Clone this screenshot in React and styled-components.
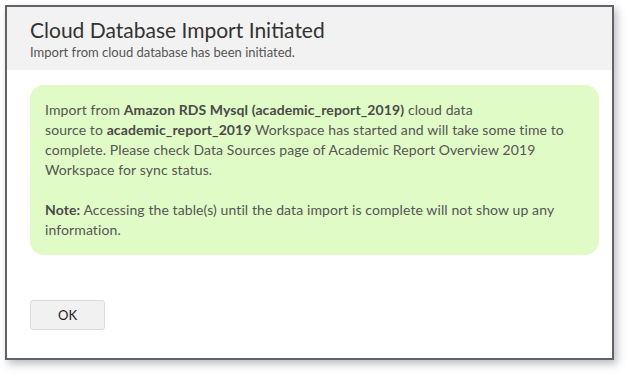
import styled, { createGlobalStyle } from "styled-components";

const Global = createGlobalStyle`
  body {
    margin: 0;
    background: #fff;
    font-family: "Lato", "Open Sans", sans-serif;
  }
`;

const Page = styled.div`
  width: 630px;
  height: 376px;
  padding: 5px 0 0 5px;
  box-sizing: border-box;
`;

const Dialog = styled.div`
  width: 609px;
  height: 355px;
  box-sizing: border-box;
  border: 2px solid #626268;
  background: #fff;
  box-shadow: 3px 4px 8px rgba(60, 70, 80, 0.35);
  display: flex;
  flex-direction: column;
`;

const Header = styled.div`
  background: #f2f2f2;
  height: 63px;
  padding: 10px 23px 0;
  box-sizing: border-box;
`;

const Title = styled.h2`
  margin: 0;
  font-size: 21px;
  font-weight: 400;
  color: #333;
  line-height: 26px;
`;

const Subtitle = styled.p`
  margin: 1px 0 0;
  font-size: 13px;
  color: #555;
  line-height: 16px;
`;

const Body = styled.div`
  padding: 15px 13px 0 23px;
  flex: 1;
  display: flex;
  flex-direction: column;
`;

const Notice = styled.div`
  background: #e0fbc6;
  border-radius: 14px;
  height: 170px;
  box-sizing: border-box;
  padding: 15px 18px 0 15px;
  font-size: 14px;
  line-height: 20px;
  letter-spacing: 0.1px;
  color: #555;
`;

const Para = styled.p`
  margin: 0 0 20px;
`;

const Strong = styled.b`
  font-weight: 700;
  color: #4a4a4a;
`;

const Actions = styled.div`
  margin-top: 45px;
`;

const Button = styled.button`
  width: 75px;
  height: 30px;
  background: #f1f1f1;
  border: 1px solid #dcdcdc;
  border-radius: 3px;
  font-family: "Lato", "Open Sans", sans-serif;
  font-size: 13px;
  color: #222;
  cursor: pointer;
`;

export default function App() {
  return (
    <>
      <Global />
      <Page>
        <Dialog>
          <Header>
            <Title>Cloud Database Import Initiated</Title>
            <Subtitle>Import from cloud database has been initiated.</Subtitle>
          </Header>
          <Body>
            <Notice>
              <Para>
                Import from <Strong>Amazon RDS Mysql (academic_report_2019)</Strong> cloud data
                <br />
                source to <Strong>academic_report_2019</Strong> Workspace has started and will take
                some time to complete. Please check Data Sources page of Academic Report Overview
                2019 Workspace for sync status.
              </Para>
              <Para>
                <Strong>Note:</Strong> Accessing the table(s) until the data import is complete
                will not show up any information.
              </Para>
            </Notice>
            <Actions>
              <Button>OK</Button>
            </Actions>
          </Body>
        </Dialog>
      </Page>
    </>
  );
}
